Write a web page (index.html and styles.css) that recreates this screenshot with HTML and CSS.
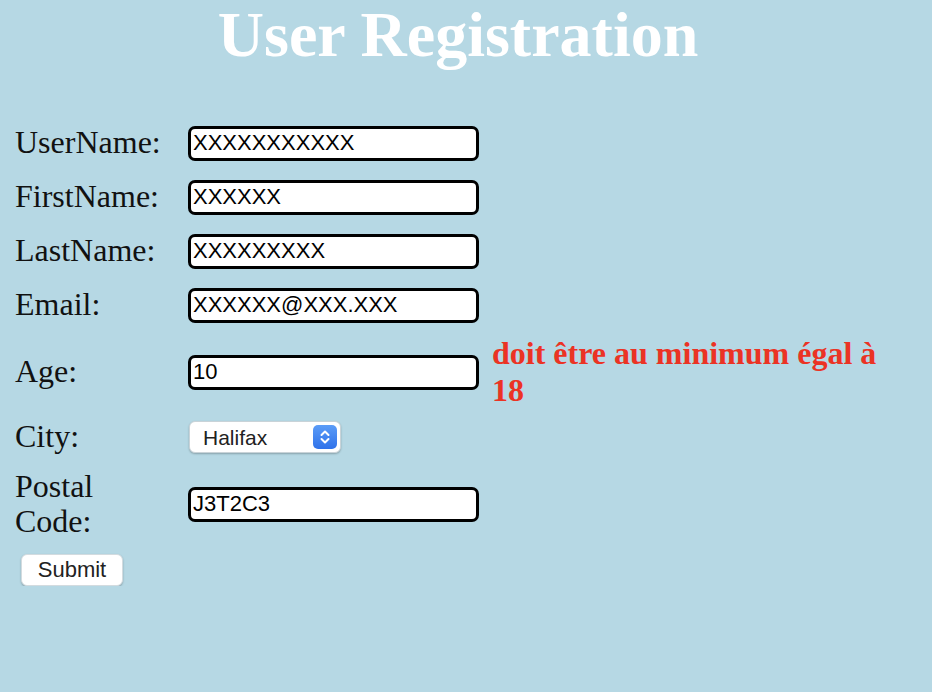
FILE: index.html
```html
<!DOCTYPE html>
<html lang="fr">
<head>
<meta charset="utf-8">
<title>User Registration</title>
<link rel="stylesheet" href="styles.css">
</head>
<body>
<h1 class="title">User Registration</h1>
<form class="form">
  <label class="label" for="username">UserName:</label>
  <input class="field" id="username" type="text" value="XXXXXXXXXXX">
  <span class="error"></span>

  <label class="label" for="firstname">FirstName:</label>
  <input class="field" id="firstname" type="text" value="XXXXXX">
  <span class="error"></span>

  <label class="label" for="lastname">LastName:</label>
  <input class="field" id="lastname" type="text" value="XXXXXXXXX">
  <span class="error"></span>

  <label class="label" for="email">Email:</label>
  <input class="field" id="email" type="text" value="XXXXXX@XXX.XXX">
  <span class="error"></span>

  <label class="label" for="age">Age:</label>
  <input class="field" id="age" type="text" value="10">
  <span class="error">doit être au minimum égal à 18</span>

  <label class="label" for="city">City:</label>
  <div class="select-wrap">
    <select class="select" id="city">
      <option>Halifax</option>
      <option>Toronto</option>
      <option>Montréal</option>
    </select>
    <span class="stepper">
      <svg width="24" height="24" viewBox="0 0 24 24">
        <path d="M8.5 10 L12 6.5 L15.5 10" fill="none" stroke="#fff" stroke-width="2" stroke-linecap="round" stroke-linejoin="round"/>
        <path d="M8.5 14 L12 17.5 L15.5 14" fill="none" stroke="#fff" stroke-width="2" stroke-linecap="round" stroke-linejoin="round"/>
      </svg>
    </span>
  </div>
  <span class="error"></span>

  <label class="label" for="postal">Postal Code:</label>
  <input class="field" id="postal" type="text" value="J3T2C3">
  <span class="error"></span>

  <div class="actions">
    <button class="submit" type="button">Submit</button>
  </div>
</form>
</body>
</html>
```

FILE: styles.css
```css
html, body {
  background: #b6d8e4;
}
body {
  margin: 0 8px;
  font-family: "Liberation Serif", "Times New Roman", serif;
  color: #000;
}
.title {
  margin: 0;
  padding: 0 16px 0 0;
  line-height: 70px;
  font-size: 64px;
  font-weight: bold;
  color: #fff;
  text-align: center;
}
.form {
  margin-top: 46px;
  padding-left: 7px;
  display: grid;
  grid-template-columns: 173px 291px 423px;
  grid-template-rows: 54px 54px 54px 54px 80px 50px 84px auto;
  align-items: center;
}
.label {
  font-size: 32px;
  line-height: 1.1;
  max-width: 155px;
  color: #111;
}
.field {
  box-sizing: border-box;
  width: 291px;
  height: 35px;
  margin: 0;
  padding: 0 2px;
  border: 3px solid #000;
  border-radius: 7px;
  background: #fff;
  font-family: "Liberation Sans", Arial, sans-serif;
  font-size: 22px;
  color: #000;
  outline: none;
}
.error {
  padding-left: 13px;
  font-size: 32px;
  font-weight: bold;
  line-height: 37px;
  color: #eb3324;
}
.select-wrap {
  position: relative;
  width: 152px;
  height: 32px;
  margin-left: 1px;
}
.select {
  -webkit-appearance: none;
  appearance: none;
  box-sizing: border-box;
  width: 152px;
  height: 32px;
  margin: 0;
  padding: 0 34px 0 13px;
  border: 1px solid #c9d3d8;
  border-radius: 6px;
  background: #fff;
  box-shadow: 0 1px 2px rgba(0, 0, 0, 0.25);
  font-family: "Liberation Sans", Arial, sans-serif;
  font-size: 21px;
  color: #222;
}
.stepper {
  position: absolute;
  top: 4px;
  right: 4px;
  width: 24px;
  height: 24px;
  border-radius: 5px;
  background: linear-gradient(#5b9cf7, #2f72ea);
  pointer-events: none;
  display: flex;
}
.actions {
  grid-column: 1 / -1;
  padding-top: 8px;
  padding-left: 6px;
}
.submit {
  box-sizing: border-box;
  width: 102px;
  height: 32px;
  margin: 0;
  padding: 0;
  border: 1px solid #d3dbdf;
  border-radius: 6px;
  background: #fff;
  box-shadow: 0 1px 2px rgba(0, 0, 0, 0.25);
  font-family: "Liberation Sans", Arial, sans-serif;
  font-size: 22px;
  color: #222;
}
```
